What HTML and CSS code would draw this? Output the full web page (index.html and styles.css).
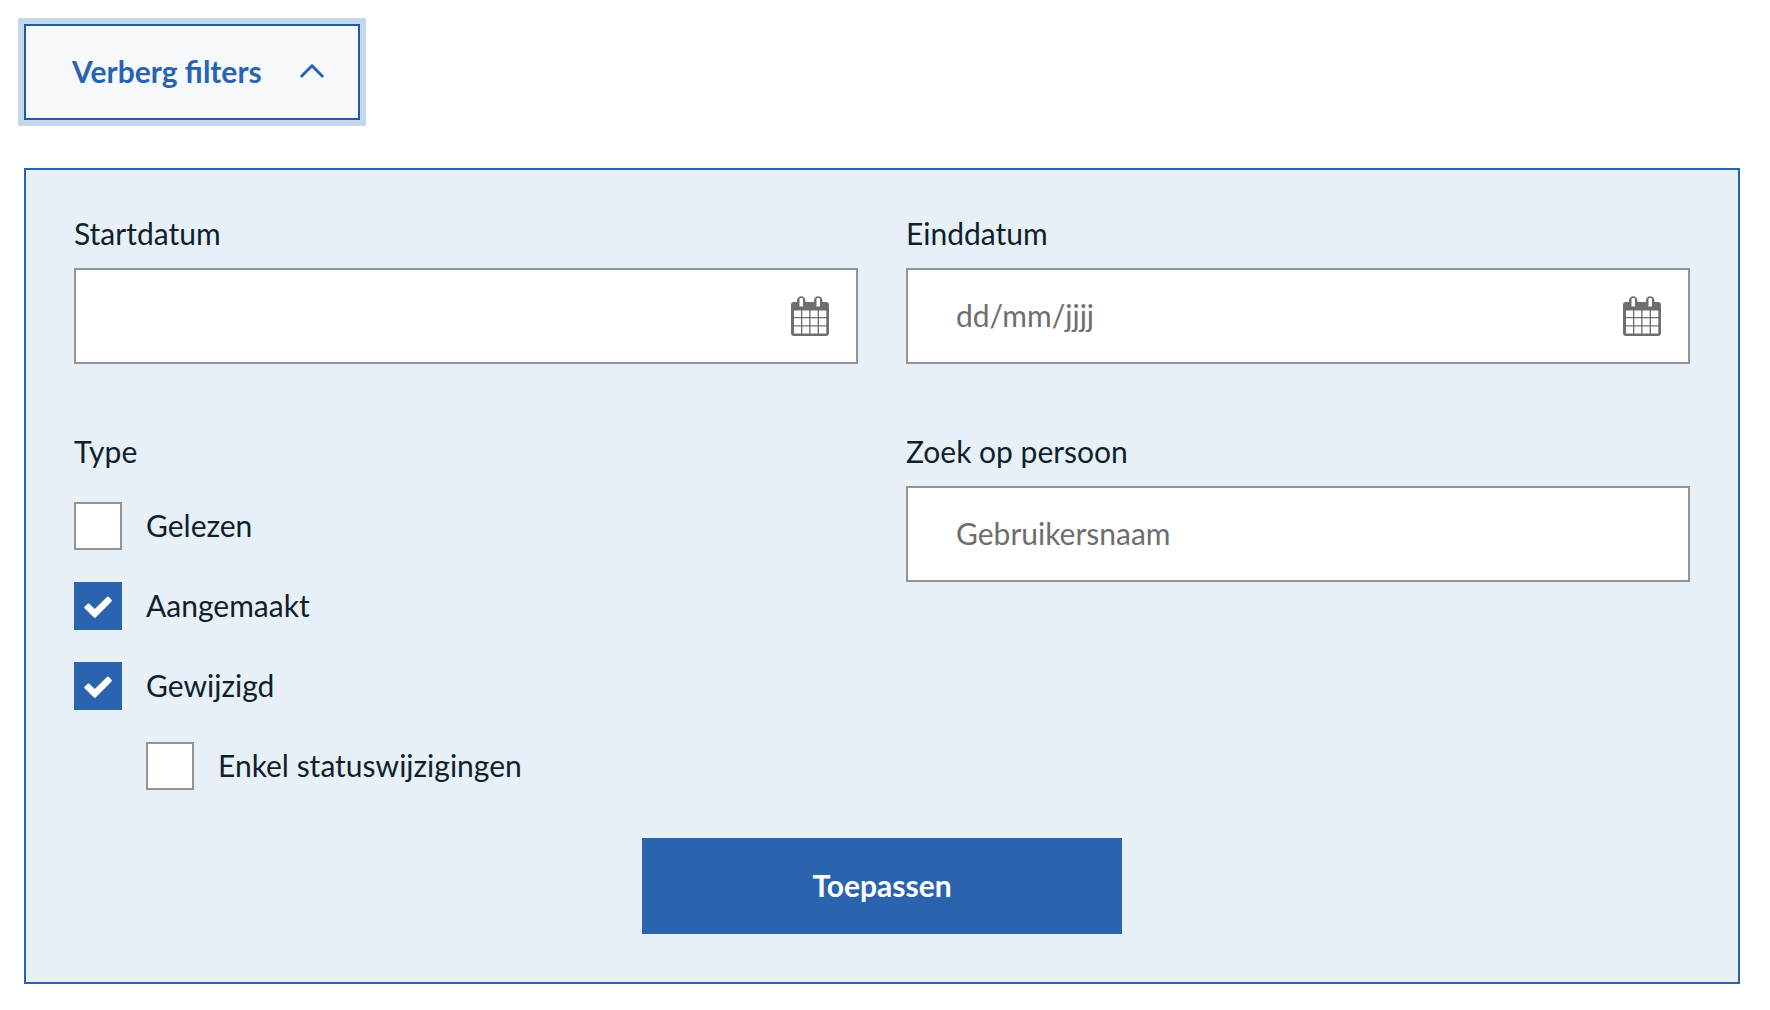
FILE: index.html
```html
<!DOCTYPE html>
<html lang="nl">
<head>
  <meta charset="utf-8">
  <meta name="viewport" content="width=device-width, initial-scale=1">
  <title>Filters</title>
  <link rel="stylesheet" href="styles.css">
</head>
<body>
  <svg class="sprite" aria-hidden="true">
    <symbol id="icon-calendar" viewBox="0 0 38 40">
      <path fill="currentColor" fill-rule="evenodd" d="M3 6H6V4.500A4.200 4.200 0 0 1 14.400 4.500V6H23V4.500A4.200 4.200 0 0 1 31.400 4.500V6H35A3 3 0 0 1 38 9V37A3 3 0 0 1 35 40H3A3 3 0 0 1 0 37V9A3 3 0 0 1 3 6ZM8.500 3V10.500H12V3A1 1 0 0 0 11 2H9.500A1 1 0 0 0 8.500 3ZM25.500 3V10.500H29V3A1 1 0 0 0 28 2H26.500A1 1 0 0 0 25.500 3ZM3 14.500V21H10V14.500ZM11.300 14.500V21H18.200V14.500ZM19.500 14.500V21H26.700V14.500ZM28 14.500V21H35.300V14.500ZM3 22.300V29.300H10V22.300ZM11.300 22.300V29.300H18.200V22.300ZM19.500 22.300V29.300H26.700V22.300ZM28 22.300V29.300H35.300V22.300ZM3 30.600V37.500H10V30.600ZM11.300 30.600V37.500H18.200V30.600ZM19.500 30.600V37.500H26.700V30.600ZM28 30.600V37.500H35.300V30.600Z"/>
    </symbol>
    <symbol id="icon-check" viewBox="0 0 48 48">
      <path fill="currentColor" stroke="currentColor" stroke-width="3" stroke-linejoin="round" d="M11.800 25.500L14.500 23L20.800 29L33.800 16.200L36.300 18.600L20.800 34.200Z"/>
    </symbol>
  </svg>

  <main class="page">
    <button class="toggle" type="button" aria-expanded="true" aria-controls="filters">
      Verberg filters
      <svg class="toggle-icon" viewBox="0 0 24 16" aria-hidden="true">
        <path fill="none" stroke="currentColor" stroke-width="3" stroke-linecap="round" d="M1.800 13L12 2.800L22.200 13"/>
      </svg>
    </button>

    <form class="filters" id="filters">
      <div class="grid">
        <div class="field">
          <label class="label" for="start">Startdatum</label>
          <div class="control">
            <input class="input" id="start" type="text">
            <button class="picker" type="button" aria-label="Kies startdatum"><svg class="picker-icon"><use href="#icon-calendar"/></svg></button>
          </div>
        </div>
        <div class="field">
          <label class="label" for="end">Einddatum</label>
          <div class="control">
            <input class="input" id="end" type="text" placeholder="dd/mm/jjjj">
            <button class="picker" type="button" aria-label="Kies einddatum"><svg class="picker-icon"><use href="#icon-calendar"/></svg></button>
          </div>
        </div>
        <fieldset class="field">
          <legend class="label">Type</legend>
          <div class="options">
            <label class="option">
              <span class="box"><input class="tick" type="checkbox"><svg class="mark"><use href="#icon-check"/></svg></span>
              <span class="option-text">Gelezen</span>
            </label>
            <label class="option">
              <span class="box"><input class="tick" type="checkbox" checked><svg class="mark"><use href="#icon-check"/></svg></span>
              <span class="option-text">Aangemaakt</span>
            </label>
            <label class="option">
              <span class="box"><input class="tick" type="checkbox" checked><svg class="mark"><use href="#icon-check"/></svg></span>
              <span class="option-text">Gewijzigd</span>
            </label>
            <label class="option option-nested">
              <span class="box"><input class="tick" type="checkbox"><svg class="mark"><use href="#icon-check"/></svg></span>
              <span class="option-text">Enkel statuswijzigingen</span>
            </label>
          </div>
        </fieldset>
        <div class="field">
          <label class="label" for="person">Zoek op persoon</label>
          <div class="control">
            <input class="input" id="person" type="text" placeholder="Gebruikersnaam">
          </div>
        </div>
      </div>
      <button class="submit" type="submit">Toepassen</button>
    </form>
  </main>
</body>
</html>
```
FILE: styles.css
```css
* {
  box-sizing: border-box;
}

body {
  margin: 0;
  background: #fff;
  color: #0f1f2c;
  font-family: Lato, "Open Sans", sans-serif;
  font-size: 30px;
  line-height: 30px;
}

button,
input {
  margin: 0;
  font: inherit;
}

button {
  cursor: pointer;
}

.sprite {
  display: none;
}

.page {
  padding: 24px 30px 24px 24px;
}

.toggle {
  display: flex;
  align-items: center;
  justify-content: space-between;
  min-width: 336px;
  height: 96px;
  padding: 0 34px 2px 46px;
  border: 2px solid #2559a0;
  background: #f5f9fc;
  box-shadow: 0 0 0 6px #c5d7ea;
  color: #2a63ae;
  font-weight: 700;
}

.toggle-icon {
  width: 24px;
  height: 16px;
}

.filters {
  margin-top: 48px;
  padding: 48px;
  border: 2px solid #2a63ae;
  background: #e7eff7;
}

.grid {
  display: grid;
  grid-template-columns: 1fr 1fr;
  gap: 72px 48px;
}

.field {
  min-width: 0;
  margin: 0;
  padding: 0;
  border: 0;
}

.label {
  display: block;
  margin-bottom: 20px;
  padding: 0;
}

.control {
  display: flex;
  height: 96px;
  border: 2px solid #949494;
  background: #fff;
}

.input {
  flex: 1;
  min-width: 0;
  padding: 0 48px 2px;
  border: 0;
  background: none;
  color: inherit;
}

.input::placeholder {
  color: #6e6e6e;
  opacity: 1;
}

.picker {
  display: flex;
  align-items: center;
  padding: 0 27px;
  border: 0;
  background: none;
  color: #6e6e6e;
}

.picker-icon {
  width: 38px;
  height: 40px;
}

.options {
  display: grid;
  gap: 32px;
  padding-top: 16px;
}

.option {
  display: flex;
  align-items: center;
  gap: 24px;
}

.option-nested {
  margin-left: 72px;
}

.option-text {
  padding-bottom: 2px;
}

.box {
  display: grid;
  width: 48px;
  height: 48px;
}

.tick,
.mark {
  grid-area: 1 / 1;
  width: 48px;
  height: 48px;
}

.tick {
  appearance: none;
  border: 2px solid #949494;
  background: #fff;
}

.tick:checked {
  border-color: #2a63ae;
  background: #2a63ae;
}

.mark {
  visibility: hidden;
  color: #fff;
  pointer-events: none;
}

.tick:checked + .mark {
  visibility: visible;
}

.submit {
  display: block;
  width: 480px;
  max-width: 100%;
  height: 96px;
  margin: 48px auto 0;
  padding: 0 24px 2px;
  border: 0;
  background: #2a63ae;
  color: #fff;
  font-weight: 700;
}
```
